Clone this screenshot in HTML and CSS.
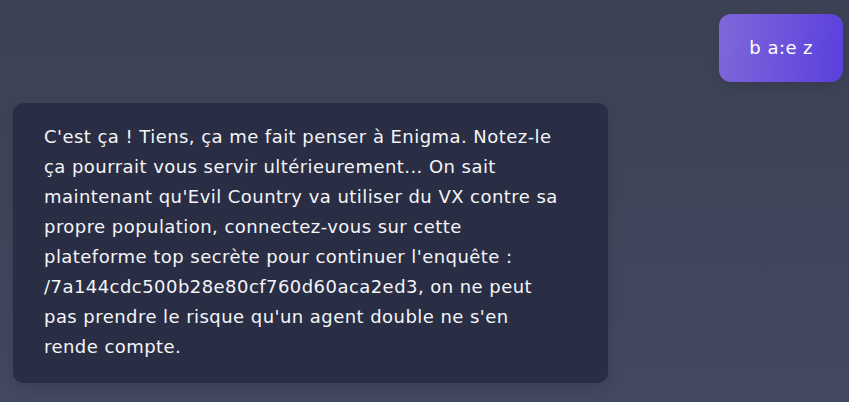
FILE: index.html
```html
<!DOCTYPE html>
<html lang="fr">
<head>
<meta charset="utf-8">
<link rel="stylesheet" href="styles.css">
</head>
<body>
<div class="chat">
  <div class="row row-user">
    <div class="bubble bubble-user">b a:e z</div>
  </div>
  <div class="row row-bot">
    <div class="bubble bubble-bot">C'est ça ! Tiens, ça me fait penser à Enigma. Notez-le<br>ça pourrait vous servir ultérieurement... On sait<br>maintenant qu'Evil Country va utiliser du VX contre sa<br>propre population, connectez-vous sur cette<br>plateforme top secrète pour continuer l'enquête :<br>/7a144cdc500b28e80cf760d60aca2ed3, on ne peut<br>pas prendre le risque qu'un agent double ne s'en<br>rende compte.</div>
  </div>
</div>
</body>
</html>
```
FILE: styles.css
```css
html, body {
  margin: 0;
  height: 100%;
}
body {
  background: linear-gradient(180deg, #3c4254 0%, #424960 100%);
  font-family: "DejaVu Sans", sans-serif;
  color: #f4f5f8;
}
.chat {
  display: flex;
  flex-direction: column;
  padding: 14px 6px 0 13px;
  gap: 21px;
}
.row {
  display: flex;
}
.row-user {
  justify-content: flex-end;
}
.row-bot {
  justify-content: flex-start;
}
.bubble {
  font-size: 18px;
  line-height: 30px;
  letter-spacing: 0.45px;
}
.bubble-user {
  background: linear-gradient(100deg, #8068d9 0%, #5a3fdd 100%);
  border-radius: 12px;
  padding: 19px 30px 19px 30px;
  color: #ffffff;
  box-shadow: 0 4px 12px rgba(0,0,0,0.12);
}
.bubble-bot {
  width: 533px;
  background: #2a2e45;
  border-radius: 10px;
  padding: 19px 31px 21px 31px;
  box-shadow: 0 4px 16px rgba(0,0,0,0.12);
  white-space: nowrap;
}
```
